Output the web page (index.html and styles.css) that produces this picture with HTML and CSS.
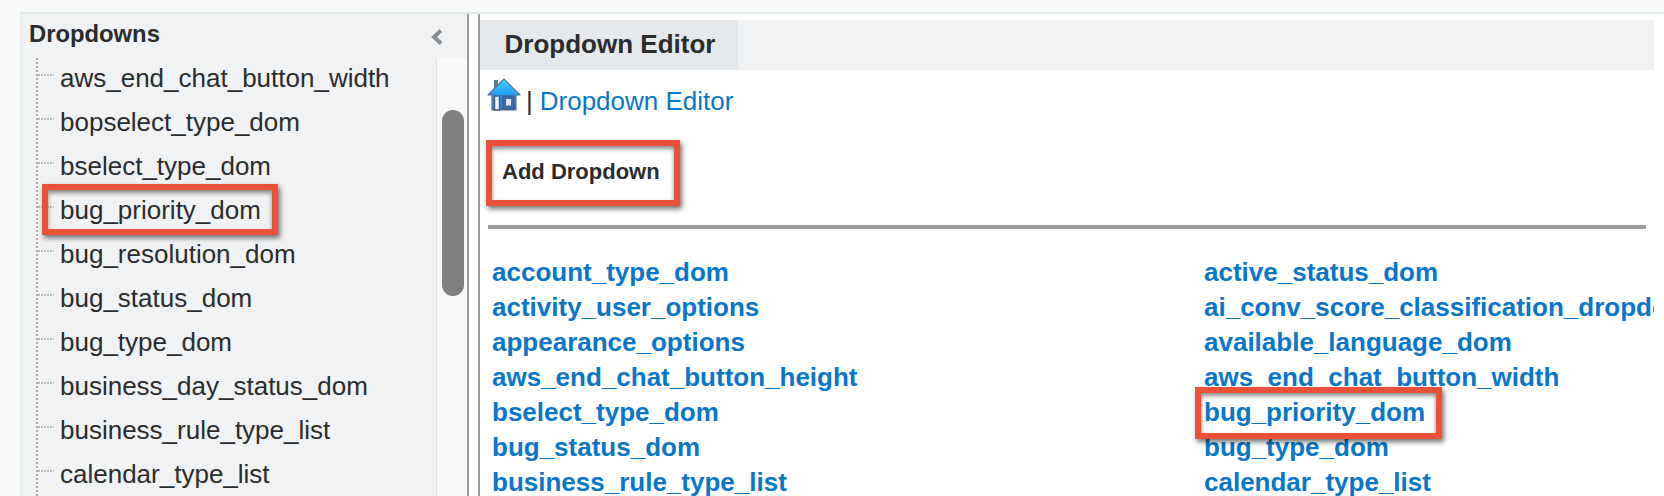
FILE: index.html
```html
<!DOCTYPE html>
<html lang="en">
<head>
<meta charset="utf-8">
<title>Dropdown Editor</title>
<link rel="stylesheet" href="styles.css">
</head>
<body>
<div class="frame">
  <aside class="sidebar">
    <div class="side-head">
      <h2>Dropdowns</h2>
      <svg class="collapse" width="14" height="18" viewBox="0 0 14 18"><path d="M11 2.500 4 9l7 6.500" fill="none" stroke="#8a8d8f" stroke-width="4"/></svg>
    </div>
    <div class="side-body">
      <ul class="tree">
        <li>aws_end_chat_button_width</li>
        <li>bopselect_type_dom</li>
        <li>bselect_type_dom</li>
        <li>bug_priority_dom</li>
        <li>bug_resolution_dom</li>
        <li>bug_status_dom</li>
        <li>bug_type_dom</li>
        <li>business_day_status_dom</li>
        <li>business_rule_type_list</li>
        <li>calendar_type_list</li>
      </ul>
      <div class="track"><div class="thumb"></div></div>
    </div>
  </aside>
  <div class="gutter"></div>
  <main class="main">
    <div class="tabs"><div class="tab">Dropdown Editor</div></div>
    <div class="content">
      <div class="crumb">
        <svg class="home" width="34" height="35" viewBox="0 0 34 35">
          <defs><linearGradient id="roof" x1="0" y1="0" x2="0" y2="1"><stop offset="0" stop-color="#3ad4ff"/><stop offset=".55" stop-color="#2596f0"/><stop offset="1" stop-color="#2a78d0"/></linearGradient></defs>
          <path d="M7 3h4v5l-4 4Z" fill="#5f7a99"/>
          <path d="M1 18 17 2l16 16h-4v15H5V18Z" fill="url(#roof)" stroke="#56708f" stroke-width="1.100" stroke-linejoin="round"/>
          <path d="M7.500 19h5v14h-5Z" fill="#f2f6fa" stroke="#3f5f90" stroke-width="1.500"/>
          <path d="M16 19h11v13H16Z" fill="#3f6aa8" stroke="#3f5f90" stroke-width="1.500"/>
          <path d="M19 22h5v6.500h-5Z" fill="#dfe6ee"/>
        </svg>
        <span class="sep">|</span>
        <a class="crumb-link">Dropdown Editor</a>
      </div>
      <div class="actions"><span class="add">Add Dropdown</span></div>
      <hr class="rule">
      <div class="links">
        <a>account_type_dom</a><a>active_status_dom</a>
        <a>activity_user_options</a><a>ai_conv_score_classification_dropdown</a>
        <a>appearance_options</a><a>available_language_dom</a>
        <a>aws_end_chat_button_height</a><a>aws_end_chat_button_width</a>
        <a>bselect_type_dom</a><a>bug_priority_dom</a>
        <a>bug_status_dom</a><a>bug_type_dom</a>
        <a>business_rule_type_list</a><a>calendar_type_list</a>
      </div>
    </div>
  </main>
  <div class="mark mark-side"></div>
  <div class="mark mark-add"></div>
  <div class="mark mark-link"></div>
</div>
</body>
</html>
```
FILE: styles.css
```css
* { box-sizing: border-box; }
html, body { margin: 0; height: 100%; overflow: hidden; }
body { background: #f8fafb; font-family: "Liberation Sans", Arial, sans-serif; color: #2a2c2e; }
.frame { position: relative; display: flex; margin: 12px 0 0 20px; height: 484px; border-top: 2px solid #e4e9ea; overflow: hidden; background: #fff; }
.sidebar { width: 447px; flex: none; background: #f1f2f4; border-left: 1px solid #e8eced; display: flex; flex-direction: column; }
.side-head { height: 44px; display: flex; align-items: flex-start; justify-content: space-between; padding: 6px 23px 0 8px; }
.side-head h2 { margin: 0; font-size: 23.800px; line-height: 28px; font-weight: 700; }
.collapse { margin-top: 8px; }
.side-body { flex: 1; display: flex; min-height: 0; }
.tree { list-style: none; margin: 0 0 0 15px; padding: 0; width: 400px; flex: none; background: repeating-linear-gradient(to bottom, #a9abad 0 2px, transparent 2px 4px) left top / 2px 100% no-repeat; }
.tree li { position: relative; height: 44px; line-height: 40px; padding-left: 24px; font-size: 26px; white-space: nowrap; }
.tree li::before { content: ""; position: absolute; left: 2px; top: 16px; width: 16px; height: 2px; background: repeating-linear-gradient(to right, #b9bbbd 0 2px, transparent 2px 3px); }
.track { width: 31px; flex: none; background: #f8f9fa; border-left: 1px solid #dfe1e3; padding: 52px 0 0 5px; }
.thumb { width: 22px; height: 186px; background: #808080; border-radius: 11px; }
.gutter { width: 13px; flex: none; background: #fff; border-left: 2px solid #9c9c9c; border-right: 2px solid #9c9c9c; }
.main { flex: 1; min-width: 0; margin-right: 10px; background: #fff; overflow: hidden; }
.tabs { margin-top: 6px; height: 50px; background: #f1f2f4; }
.tab { display: block; width: 258px; height: 50px; padding-left: 2px; line-height: 48px; background: #e5e9eb; text-align: center; font-size: 26px; font-weight: 700; border-radius: 3px 3px 0 0; }
.content { padding: 0 0 0 7px; }
.crumb { height: 70px; display: flex; align-items: flex-start; }
.home { margin-top: 7px; flex: none; }
.sep { font-size: 26px; line-height: 30px; margin: 16px 0 0 5px; }
.crumb-link { color: #0a76c9; font-size: 26px; line-height: 30px; margin: 16px 0 0 7px; }
.actions { height: 85px; padding: 16px 0 0 15px; }
.add { font-size: 22px; font-weight: 700; line-height: 32px; }
.rule { margin: 0 0 0 1px; height: 4px; border: 0; background: #9c9c9c; width: 1158px; }
.links { display: grid; grid-template-columns: 712px 1fr; grid-auto-rows: 35px; padding: 26px 0 0 5px; font-size: 26px; font-weight: 700; line-height: 35px; white-space: nowrap; }
.links a { color: #0a76c9; }
.mark { position: absolute; border: 6px solid #ea5138; box-shadow: 2px 3px 5px rgba(0,0,0,.55), inset 0 3px 4px rgba(0,0,0,.45); }
.mark-side { left: 22px; top: 170px; width: 236px; height: 51px; }
.mark-add { left: 466px; top: 126px; width: 194px; height: 66px; }
.mark-link { left: 1175px; top: 373px; width: 247px; height: 52px; }
```
